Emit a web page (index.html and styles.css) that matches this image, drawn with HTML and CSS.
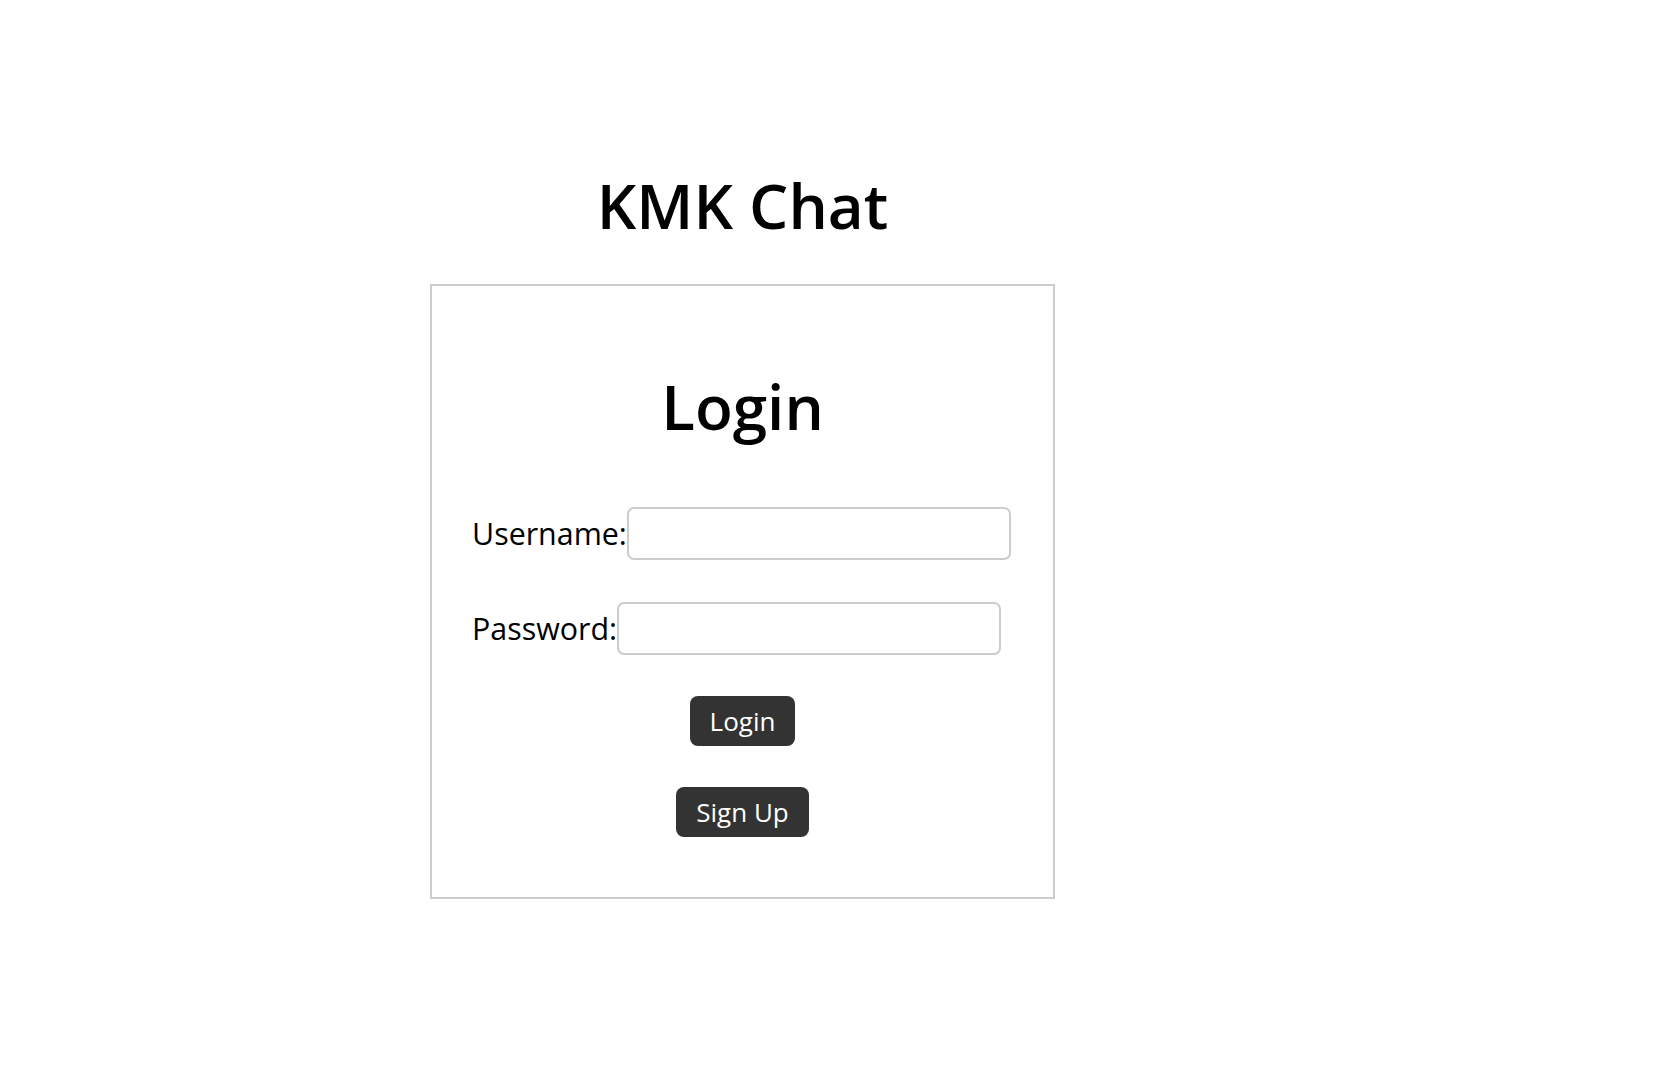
FILE: index.html
```html
<!DOCTYPE html>
<html lang="en">
<head>
<meta charset="utf-8">
<title>KMK Chat</title>
<link rel="stylesheet" href="styles.css">
</head>
<body>
<div class="page">
  <h1 class="title">KMK Chat</h1>
  <div class="card">
    <h2 class="card-title">Login</h2>
    <form class="form">
      <div class="field">
        <label class="label" for="username">Username:</label>
        <input class="input" id="username" type="text">
      </div>
      <div class="field field-second">
        <label class="label" for="password">Password:</label>
        <input class="input" id="password" type="password">
      </div>
      <button class="btn btn-login" type="button">Login</button>
      <button class="btn btn-signup" type="button">Sign Up</button>
    </form>
  </div>
</div>
</body>
</html>
```
FILE: styles.css
```css
html, body {
  margin: 0;
  padding: 0;
  background: #ffffff;
}
body {
  font-family: "Open Sans", "Noto Sans", sans-serif;
  color: #000;
}
.page {
  width: 1485px;
  display: flex;
  flex-direction: column;
  align-items: center;
  padding-top: 173px;
}
.title {
  margin: 0 0 47px 0;
  font-size: 62px;
  line-height: 64px;
  font-weight: 600;
}
.card {
  width: 625px;
  box-sizing: border-box;
  border: 2px solid #cccccc;
  padding: 89px 40px 60px 40px;
  display: flex;
  flex-direction: column;
  align-items: center;
}
.card-title {
  margin: 0 0 69px 0;
  font-size: 62px;
  line-height: 63px;
  font-weight: 600;
}
.form {
  align-self: stretch;
  display: flex;
  flex-direction: column;
  align-items: center;
}
.field {
  align-self: stretch;
  display: flex;
  align-items: center;
  margin-bottom: 42px;
}
.field-second {
  margin-bottom: 41px;
}
.label {
  font-size: 30.4px;
  line-height: 30px;
}
.input {
  width: 384px;
  height: 53px;
  box-sizing: border-box;
  border: 2px solid #cccccc;
  border-radius: 7px;
  margin: 0;
  padding: 0 8px;
  font-size: 22px;
  background: #fff;
}
.btn {
  height: 50px;
  padding: 0 20px;
  border: none;
  border-radius: 8px;
  background: #333333;
  color: #ffffff;
  font-family: "Open Sans", "Noto Sans", sans-serif;
  font-size: 26px;
  line-height: 50px;
}
.btn-login {
  margin-bottom: 41px;
}
```
